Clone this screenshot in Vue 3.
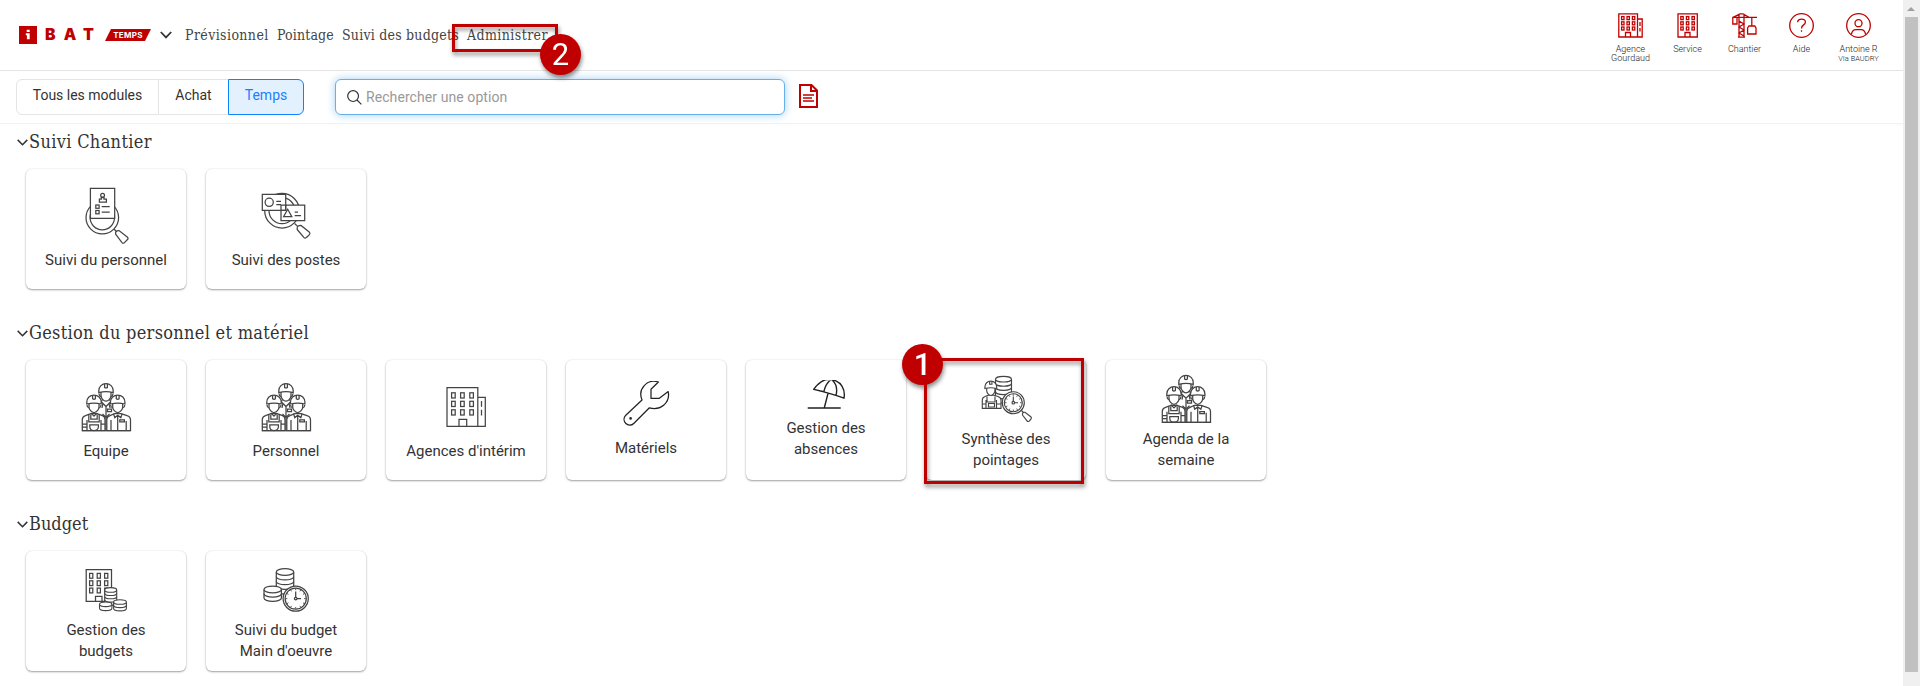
<script setup>
const rects = (xs, ys, w, h) =>
  xs.flatMap((x) => ys.map((y) => `<rect x="${x}" y="${y}" width="${w}" height="${h}"/>`)).join('')

const stack = (cx, top, rx, ry, step, n) => {
  const l = cx - rx
  const r = cx + rx
  let out = `<path fill="#fff" d="M${l} ${top}V${top + step * n}A${rx} ${ry} 0 0 0 ${r} ${top + step * n}V${top}"/>`
  for (let i = 1; i < n; i++) {
    out += `<path d="M${l} ${top + step * i}A${rx} ${ry} 0 0 0 ${r} ${top + step * i}"/>`
  }
  return out + `<ellipse fill="#fff" cx="${cx}" cy="${top}" rx="${rx}" ry="${ry}"/>`
}

const clock = (cx, cy, r1, r2) => {
  let t = ''
  for (let i = 0; i < 12; i++) {
    const a = (i * Math.PI) / 6
    t += `M${cx + Math.cos(a) * (r2 - 2.2)} ${cy + Math.sin(a) * (r2 - 2.2)}L${cx + Math.cos(a) * (r2 - 0.6)} ${cy + Math.sin(a) * (r2 - 0.6)}`
  }
  return `<circle fill="#fff" cx="${cx}" cy="${cy}" r="${r1}"/><circle cx="${cx}" cy="${cy}" r="${r2}"/>
    <path stroke-width=".9" d="${t}"/><circle cx="${cx}" cy="${cy}" r="1.3"/>
    <path d="M${cx} ${cy - 1.3}V${cy - r2 * 0.68}M${cx + 1.3} ${cy}h${r2 * 0.38}"/>`
}

const head = (x, y) => `<g transform="translate(${x} ${y})">
  <path fill="#fff" d="M-5 0V3.5C-5 6-2.5 9.2 0 9.2S5 6 5 3.5V0"/>
  <path fill="#fff" d="M-7.2 .6V-1.2C-7.2-5.4-4-8.4 0-8.4S7.2-5.4 7.2-1.2V.6Q0-1.2-7.2 .6Z"/>
  <path d="M-1.4-8.2V-4.6Q0-3.6 1.4-4.6V-8.2M-7 1.5Q-7 4-5 4.6M7 1.5Q7 4 5 4.6"/></g>`

const crew = `${head(80, 32)}
  <path d="M76.5 39.5 74.5 43M83.5 39.5 85.5 43M75.5 42 80 46.5 84.5 42M77 43 76 48M83 43 84 48M80 46.5V70.5M76.5 54 80 57.5 83.5 54M81.5 49h4v2.5h-4z"/>
  <path fill="#fff" d="M56.3 70.6V59.5Q56.3 56.5 59.5 55.6L64.8 53.6H71.2L76.5 55.6Q79 56.5 79 59.5V70.6Z"/>
  <path d="M65 53 68 56.2 71 53M61 70.5V60M75 70.5V60M62.8 54.5V61.8H73.2V54.5M64.8 54.5V59H71.2V54.5M63.8 64.8H72.4V67Q72 70.5 68 70.5T63.8 67ZM56.5 64H61M56.5 67H61M75 64H79"/>
  <path fill="#fff" d="M80.8 70.6V59.5Q80.8 56.5 84 55.6L88.5 53.6H95L101 55.6Q104.5 56.5 104.5 60V70.6Z"/>
  <path d="M87.5 53.6 88.8 57.6 91.7 55.2 94.8 57.6 96.2 53.6M91.7 55.2V70.5M85 60V70.5M100.2 61V70.5M93.8 59.8h4.6v2h-4.6zM56 70.6H104.6"/>
  ${head(68, 43.4)}${head(91.7, 43.4)}`

const building = `<path d="M61 27.6H91.8V66.4H61ZM91.8 37.3H99.3V66.4H91.8M73 66.4V59.3H80.7V66.4M95.5 41V46.7M95.5 49.8V55.5"/>
  ${rects([65.6, 74.6, 83.8], [32.8, 41.3, 49.8], 3.6, 5.2)}`

const icons = {
  person: `<circle cx="76.3" cy="48.6" r="16.3"/><circle cx="76.3" cy="48.6" r="12.2"/>
    <path fill="#fff" d="M64.4 19.3H88.7V49.3H64.4Z"/>
    <circle cx="76.6" cy="26.2" r="1.9"/><path d="M75.3 28.6H78V30.2H80.4V33.2H73.4V30.2H75.3Z"/>
    ${rects([69.8], [36, 41.5], 3.3, 3.3)}<path d="M75.7 37.7H83.7M75.7 43.2H83.7M88.2 60.2 90.2 62.3"/>
    <path fill="#fff" d="M89.6 65.2 96 73.6Q97.4 75 98.7 73.4L101.5 70.5Q102.7 69.3 101.2 68L93 61.6Q89 61.5 89.6 65.2Z"/>`,
  posts: `<circle cx="76" cy="41.7" r="17.3"/><circle cx="76" cy="41.7" r="13"/>
    <path fill="#fff" d="M56.3 25.4H79.7V41.3H56.3ZM75 36.2H98.7V51.6H75Z"/><path d="M79.7 36V41.3H75"/>
    <circle cx="63.2" cy="33.3" r="4.1"/><path d="M70.3 32.3H75M70.3 35.7H75M81.7 40.3 77.6 47.6H85.8ZM88.7 43.2H92M88.7 46.7H95M88.6 54.5 91.6 57.4"/>
    <path fill="#fff" d="M91.2 60.5 97.8 68.4Q99.3 69.9 100.7 68.2L103.4 65.6Q104.6 64.2 103.2 63L95 56.4Q90.6 56.4 91.2 60.5Z"/>`,
  crew,
  crewHigh: `<g transform="translate(0 -8.3)">${crew}</g>`,
  building,
  wrench: `<path stroke-linejoin="round" d="M92.4 22C81 18.5 71.5 29 76 40L59.8 55.2C54.5 61 62.5 69 68 63.2L83.4 47.8C94 51 104.5 43 102.2 31.6L93 38.4H85V29.3Z"/><circle cx="64.6" cy="58.4" r=".7"/>`,
  umbrella: `<path stroke-linejoin="round" d="M67.7 29.4C74 20.5 80 18 87 19.8C95.5 22 99.5 29.5 98 38.2L90 35.3L77.8 31.8ZM85.4 19.3C81 22.2 79 26.5 77.8 31.8M85.4 19.3C90.5 23.5 91.6 29 90 35.3M82 33.5 78.3 47.7M61.7 48H94.7"/>`,
  synthesis: `<g stroke-width="1.15">${stack(77.5, 19.2, 8, 2.8, 4.2, 5)}
    <path fill="#fff" d="M56.3 48.3V40Q56.3 37.5 59 36.5L62 35.2H68L72 36.5Q75 37.5 75 40V48.3Z"/>
    <path d="M61 36.5V42H69V36.5M60 40V48M70.5 40V48M62.5 43.5H68.5V47H62.5ZM56.5 44H60M70.5 44H75"/>
    <g transform="translate(64.8 28) scale(.82)" stroke-width="1.4"><path fill="#fff" d="M-5 0V3.5C-5 6-2.5 9.2 0 9.2S5 6 5 3.5V0"/><path fill="#fff" d="M-7.2 .6V-1.2C-7.2-5.4-4-8.4 0-8.4S7.2-5.4 7.2-1.2V.6Q0-1.2-7.2 .6Z"/><path d="M-1.4-8V-4.6H1.4V-8"/></g>
    ${clock(87.3, 42.7, 11, 9)}<path d="M95.4 50.5 97.4 52.5"/>
    <path fill="#fff" d="M96.5 55 101 60.8Q102 62.2 103.4 60.8L105 59Q106 57.8 104.8 56.8L99 52.3Q96 52 96.5 55Z"/></g>`,
  budget: `<path d="M60.2 18.5H85.5V50.3H60.2ZM69.5 50.3V45.3H76V50.3"/>
    ${rects([63.6, 71.2, 78.6], [22.4, 29.8, 37.1], 3.2, 4.8)}
    <g stroke-width="1.1">${stack(84.7, 38.9, 6, 2.3, 3.3, 4)}${stack(79.7, 53.3, 6.2, 2.3, 4, 1)}${stack(94, 51, 6.4, 2.3, 3.3, 2)}</g>`,
  labor: `${stack(79, 21, 8.7, 3.3, 4.7, 4)}${stack(66.7, 38.4, 8.7, 3.4, 4.3, 2)}${clock(89.7, 47.6, 12.6, 10.6)}`
}

const sections = [
  {
    title: 'Suivi Chantier', fit: 'fit-a',
    cards: [
      { label: ['Suivi du personnel'], icon: 'person', top: 18, h: 63 },
      { label: ['Suivi des postes'], icon: 'posts', top: 18, h: 63 }
    ]
  },
  {
    title: 'Gestion du personnel et matériel', fit: 'fit-b',
    cards: [
      { label: ['Equipe'], icon: 'crew', top: 18, h: 63 },
      { label: ['Personnel'], icon: 'crew', top: 18, h: 63 },
      { label: ["Agences d'intérim"], icon: 'building', top: 18, h: 63 },
      { label: ['Matériels'], icon: 'wrench', top: 21, h: 57 },
      { label: ['Gestion des', 'absences'], icon: 'umbrella', top: 20, h: 38 },
      { label: ['Synthèse des', 'pointages'], icon: 'synthesis', top: 9, h: 60, step: '1' },
      { label: ['Agenda de la', 'semaine'], icon: 'crewHigh', top: 9, h: 60 }
    ]
  },
  {
    title: 'Budget', fit: 'fit-c',
    cards: [
      { label: ['Gestion des', 'budgets'], icon: 'budget', top: 9, h: 60 },
      { label: ['Suivi du budget', "Main d'oeuvre"], icon: 'labor', top: 9, h: 60 }
    ]
  }
]

const windows = (xs) => rects(xs, [3.6, 8.8, 14], 2.4, 3)
const actions = [
  { lines: ['Agence', 'Gourdaud'], art: `<path d="M.8 .8H19.5V24H.8ZM19.5 6H24.2V24H19.5M7.5 24V19.5H12.5V24M22 9V13M22 15V18.5"/>${windows([3.6, 9, 14.4])}` },
  { lines: ['Service'], art: `<path d="M3 .8H22.3V24H3ZM10 24V19.5H15V24"/>${windows([5.8, 11.4, 17])}` },
  { lines: ['Chantier'], art: `<path d="M7 4.3V24.2H12V4.3M6 24.2H13M7 8 12 11 7 14 12 17 7 20 12 23M1 4.3H25M1 4.3 8 .8H11L17 4.3M7 .8V4M12 .8V4M.8 4.3H5V11H.8ZM19.8 4.3V13M17 13H22.8L24 15V21H15.6V15Z"/>` },
  { lines: ['Aide'], art: `<circle cx="12.5" cy="12.5" r="11.8"/><path d="M8.6 9.2C8.8 5 16.6 5 16.4 9.2C16.2 12.2 12.5 11.6 12.5 15.4M12.5 17.3V18.8"/>` },
  { lines: ['Antoine R', 'VIa BAUDRY'], small: true, art: `<circle cx="12.5" cy="12.5" r="11.8"/><circle cx="12.5" cy="10.2" r="3.5"/><path d="M5.4 21.7C5.8 18.3 7.5 16.6 10 16.6H15C17.5 16.6 19.2 18.3 19.6 21.7"/>` }
]
</script>

<template>
  <div class="window">
    <div class="page">
      <header class="header">
        <div class="logo">
          <svg class="mark" width="18" height="18" viewBox="0 0 18 18"><rect width="18" height="18" fill="#c00000" /><path fill="#fff" d="M7.7 3.8h3v2.2h-3zM6.8 7.3h3.9v6h-2.8v-4H6.8z" /></svg>
          <span class="bat">BAT</span>
          <span class="badge">TEMPS</span>
          <svg class="caret" width="12" height="8" viewBox="0 0 12 8"><path d="M.8 1 6 6.4 11.2 1" /></svg>
        </div>
        <nav class="nav">
          <a class="n1">Prévisionnel</a>
          <a class="n2">Pointage</a>
          <a class="n3">Suivi des budgets</a>
          <a class="n4">Administrer<span class="frame frame-nav"><b class="step">2</b></span></a>
        </nav>
        <div class="actions">
          <div v-for="a in actions" :key="a.lines[0]" class="action">
            <svg width="25" height="25" viewBox="0 0 25 25" v-html="a.art" />
            <span v-for="(l, i) in a.lines" :key="l" :class="{ tiny: a.small && i }">{{ l }}</span>
          </div>
        </div>
      </header>

      <div class="toolbar">
        <div class="tabs">
          <button class="tab all">Tous les modules</button>
          <button class="tab buy">Achat</button>
          <button class="tab active">Temps</button>
        </div>
        <div class="search">
          <svg width="15" height="15" viewBox="0 0 15 15"><circle cx="6.1" cy="6.1" r="5.4" /><path d="M10 10 14.4 14.4" /></svg>
          <span>Rechercher une option</span>
        </div>
        <svg class="doc" width="19" height="24" viewBox="0 0 19 24"><path d="M1 1H12.5L18 6.5V23H1ZM12 1V7H18" stroke-width="2" /><path d="M4 11H15M4 14H13M4 17H15" stroke-width="1.3" /></svg>
      </div>

      <main>
        <section v-for="s in sections" :key="s.title">
          <h2>
            <svg width="11" height="7" viewBox="0 0 11 7"><path d="M.7 .9 5.5 5.7 10.3 .9" /></svg>
            <span :class="s.fit">{{ s.title }}</span>
          </h2>
          <div class="cards">
            <div v-for="c in s.cards" :key="c.label[0]" class="card">
              <svg
                class="art" :class="{ thin: c.icon === 'wrench', dark: c.icon === 'umbrella' }"
                width="160" :height="c.h" :viewBox="`0 ${c.top} 160 ${c.h}`" v-html="icons[c.icon]"
              />
              <div v-for="l in c.label" :key="l" class="label">{{ l }}</div>
              <span v-if="c.step" class="frame frame-card"><b class="step">{{ c.step }}</b></span>
            </div>
          </div>
        </section>
      </main>
    </div>
    <aside class="scroll"><i class="arrow"></i><i class="thumb"></i></aside>
  </div>
</template>

<style>
html, body { margin: 0; overflow: hidden; background: #fff; }
</style>

<style scoped>
* { box-sizing: border-box; }
.window { display: flex; width: 1920px; height: 686px; overflow: hidden; font-family: Roboto, "Liberation Sans", sans-serif; color: #333; background: #fff; }
.page { flex: 1; min-width: 0; }
svg { display: block; flex: none; fill: none; }

.header { display: flex; height: 71px; border-bottom: 1px solid #e4e4e4; padding-left: 19px; }
.logo { display: flex; align-items: center; height: 70px; width: 166px; }
.bat { margin-left: 8px; width: 60px; font: 900 15.8px/18px Inter, Roboto, sans-serif; letter-spacing: 8.2px; color: #c00000; white-space: nowrap; }
.badge { width: 46px; height: 12px; margin-right: 9px; background: #c00000; clip-path: polygon(13% 0, 100% 0, 87% 100%, 0 100%); color: #fff; font: 700 8px/12px Inter, Roboto, sans-serif; letter-spacing: .3px; text-align: center; }
.caret path { stroke: #333; stroke-width: 1.8; }
.nav { display: flex; font: 14px/20px "Roboto Slab", "DejaVu Serif Condensed", "DejaVu Serif", serif; color: #444; padding-top: 25px; white-space: nowrap; }
.n1 { width: 92px; letter-spacing: .4px; }
.n2 { width: 65px; letter-spacing: .15px; }
.n3 { width: 125px; letter-spacing: .22px; }
.n4 { position: relative; width: 90px; letter-spacing: .42px; }
.actions { display: flex; margin-left: auto; padding: 13px 16px 0 0; }
.action { display: flex; flex-direction: column; align-items: center; width: 57px; font-size: 9px; line-height: 9px; font-weight: 300; color: #222; }
.action svg { stroke: #c00000; stroke-width: 1.3; margin-bottom: 7px; }
.tiny { font-size: 7.5px; }

.toolbar { display: flex; align-items: flex-start; height: 53px; padding: 8px 0 0 16px; border-bottom: 1px solid #f2f2f2; box-shadow: 0 1px 2px rgba(0, 0, 0, .02); }
.tabs { display: flex; height: 36px; width: 288px; }
.tab { padding: 0 0 4px; margin: 0; border: 1px solid #e4e4e4; background: #fff; font: 14px/20px Roboto, sans-serif; color: #333; }
.all { width: 143px; border-radius: 6px 0 0 6px; }
.buy { width: 69px; border-left: 0; border-right: 0; }
.active { width: 76px; border-color: #0d83ff; border-radius: 0 6px 6px 0; background: #e3f1fe; color: #1a80ff; }
.search { display: flex; align-items: center; width: 450px; height: 36px; margin-left: 31px; padding-left: 11px; border: 1px solid #66afe9; border-radius: 6px; box-shadow: 0 0 8px rgba(102, 175, 233, .6); font-size: 14px; letter-spacing: .08px; color: #999; background: #fff; }
.search svg { stroke: #333; stroke-width: 1.2; margin-right: 4px; }
.doc { margin: 5px 0 0 14px; stroke: #c00000; }

section { height: 191px; }
h2 { display: flex; align-items: center; height: 45px; margin: 0; padding: 0 0 9px 17px; font: 400 18px/24px "Roboto Slab", "DejaVu Serif Condensed", "DejaVu Serif", serif; color: #333; white-space: nowrap; }
h2 svg { stroke: #333; stroke-width: 1.5; margin-right: 1px; }
.fit-a { letter-spacing: .33px; }
.fit-b { letter-spacing: .3px; }
.cards { display: flex; gap: 20px; padding-left: 26px; }
.card { position: relative; display: flex; flex-direction: column; align-items: center; justify-content: center; width: 160px; height: 120px; border-radius: 6px; background: #fff; box-shadow: 0 1px 2px rgba(0, 0, 0, .36), 0 0 2px rgba(0, 0, 0, .1); }
.art { stroke: #444; stroke-width: 1.25; }
.art.thin, .art.dark { stroke: #222; }
.art.dark { stroke-width: 1.4; }
.label { height: 21px; font-size: 15px; line-height: 21px; white-space: nowrap; }

.frame { position: absolute; border: 3px solid #c00000; filter: drop-shadow(1px 3px 2px rgba(0, 0, 0, .45)); z-index: 2; }
.frame-nav { left: -15px; top: -1px; width: 106px; height: 28px; }
.frame-card { left: -2px; top: -2px; width: 160px; height: 126px; }
.step { position: absolute; width: 41px; height: 41px; border-radius: 50%; background: #c00000; color: #fff; font: 400 31px/41px Roboto, sans-serif; letter-spacing: 0; text-align: center; }
.frame-nav .step { left: 85px; top: 7px; }
.frame-card .step { left: -25px; top: -17px; font-weight: 500; }

.scroll { display: flex; flex-direction: column; align-items: center; width: 17px; background: #f0f0f0; }
.arrow { margin-top: 7px; margin-right: 1px; border: 4px solid transparent; border-top: 0; border-bottom-color: #a0a0a0; }
.thumb { width: 13px; height: 655px; margin: 6px 0 0; background: #c1c1c1; flex: none; }
</style>
